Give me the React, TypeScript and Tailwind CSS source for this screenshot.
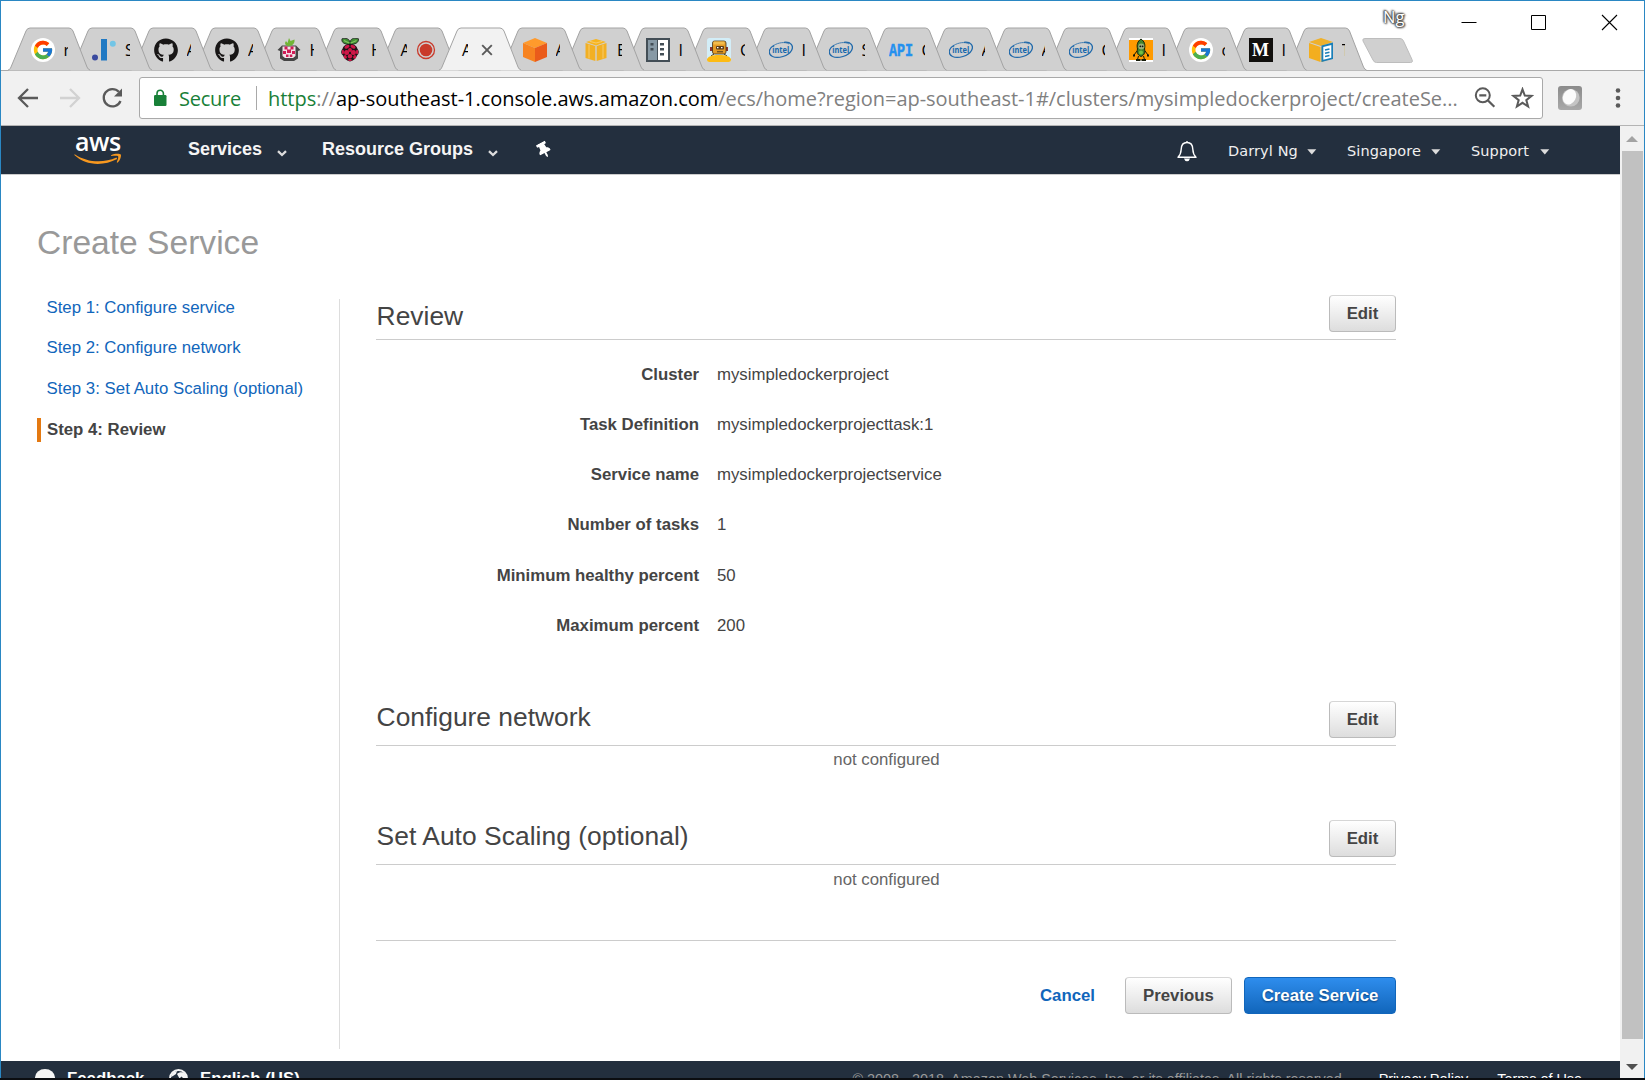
import type { ReactNode } from "react";
import { FcGoogle } from "react-icons/fc";
import { FaGithub, FaThumbtack } from "react-icons/fa";

function GoogleIcon() {
  return (
    <span className="flex size-6 items-center justify-center rounded-full bg-white">
      <FcGoogle size={22} />
    </span>
  );
}

function BarsIcon() {
  return (
    <svg width="24" height="24" viewBox="0 0 24 24">
      <circle cx="3" cy="19.5" r="3" fill="#3a4a9f" />
      <rect x="9" y="1" width="6" height="21.5" fill="#2079c3" />
      <circle cx="20.8" cy="5.8" r="3" fill="#72c5e6" />
    </svg>
  );
}

function GithubIcon() {
  return <FaGithub size={24.5} color="#181616" />;
}

function PiHomeIcon() {
  return (
    <svg width="24" height="24" viewBox="0 0 24 24">
      <path d="M.5 12 5 7.500h14l4.500 4.500-2.500 1v7.500L17 23H7l-4-2.500V13z" fill="#454545" />
      <path d="M5.500 8.500h13V18L16 20H8l-2.500-2z" fill="#f3e3e8" />
      <path d="M7.500 8.500h3v3h-3zM13.500 8.500h3v3h-3zM10 11.500h4v3.500h-4zM6 13h3v3H6zM15 13h3v3h-3zM9 16.500h2.500v2.500H9zM12.800 16.500h2.500v2.500h-2.500z" fill="#d01c56" />
      <path d="M12 8C8.500 8 7 5.500 9 3l1.500 2L12 0l1.500 3 4-1.500C18 5 16 8 12 8z" fill="#71b536" />
    </svg>
  );
}

function RaspberryIcon() {
  return (
    <svg width="24" height="24" viewBox="0 0 24 24">
      <path d="M12 6C7 7 3 4.500 4 .8 8-.2 11 .5 12 4 13-.2 17-.2 20.500.8 21 4.500 17 7 12 6z" fill="#3f8f33" stroke="#1d1d1d" strokeWidth=".8" />
      <path d="M6 2.500 11 5M18.500 2.500 13 5" stroke="#84c660" strokeWidth="1.200" />
      <path d="M12 6c4 0 7 2 7.500 5 2 2 1.500 5-.5 6.500-1 3-4 5.500-7 6-3-.5-6-3-7-6C3 16 2.500 13 4.500 11 5 8 8 6 12 6z" fill="#1d1418" />
      <g fill="#cf1647">
        <ellipse cx="9" cy="8.800" rx="2.700" ry="1.600" transform="rotate(-25 9 8.800)" />
        <ellipse cx="15" cy="8.800" rx="2.700" ry="1.600" transform="rotate(25 15 8.800)" />
        <circle cx="12" cy="12" r="2" />
        <circle cx="8.600" cy="14.500" r="2.500" />
        <circle cx="15.400" cy="14.500" r="2.500" />
        <ellipse cx="4.900" cy="14" rx="1.100" ry="2.300" />
        <ellipse cx="19.100" cy="14" rx="1.100" ry="2.300" />
        <circle cx="12" cy="18.200" r="2.200" />
        <ellipse cx="7.300" cy="18.900" rx="1.500" ry="1.900" transform="rotate(-30 7.300 18.900)" />
        <ellipse cx="16.700" cy="18.900" rx="1.500" ry="1.900" transform="rotate(30 16.700 18.900)" />
        <ellipse cx="12" cy="21.900" rx="2" ry="1" />
      </g>
    </svg>
  );
}

function OrangeCubeIcon() {
  return (
    <svg width="24" height="24" viewBox="0 0 24 24">
      <path d="M12 0 24 5 12 10 0 5z" fill="#ff9a2c" />
      <path d="M0 5 12 10v14L0 19z" fill="#f78320" />
      <path d="M24 5 12 10v14l12-5z" fill="#ea5b1b" />
    </svg>
  );
}

function YellowCubeIcon() {
  return (
    <svg width="24" height="24" viewBox="0 0 24 24">
      <path d="M12 1 22 4 12 7.500 2 4z" fill="#f7b51e" />
      <path d="M1.500 5 11.300 8v15L1.500 20z" fill="#f2b024" />
      <path d="M22.500 5 12.700 8v15l9.800-3z" fill="#f2b024" />
      <path d="M5.500 3.300 12 5l6.500-1.700M5 6.500V20.500M19 6.500V20.500" stroke="#f8cb6c" strokeWidth="1" fill="none" />
    </svg>
  );
}

function RackIcon() {
  return (
    <svg width="24" height="24" viewBox="0 0 24 24">
      <rect width="24" height="24" fill="#434e56" />
      <rect x="2" y="2" width="9" height="20" fill="#8799a5" />
      <rect x="12" y="2" width="10" height="20" fill="#fff" />
      <path d="M4.500 5h3v2.500h-3zM4.500 10h3v2.500h-3zM14 5h4v2.500h-4zM14 10h4v2.500h-4zM14 15h4v2.500h-4z" fill="#434e56" />
    </svg>
  );
}

function RobotIcon() {
  return (
    <svg width="24" height="24" viewBox="0 0 24 24">
      <rect width="24" height="24" rx="2.500" fill="#d3eef8" />
      <path d="M3 9h3v4H3zM18 9h3v4h-3z" fill="#8d3430" />
      <rect x="5.500" y="3" width="13.500" height="13" rx="2" fill="#e59b25" stroke="#45351b" strokeWidth=".8" />
      <path d="M6.500 3.500h11v3h-11z" fill="#f3bd4d" />
      <rect x="9" y="8" width="8" height="3.500" rx="1" fill="#593d1c" />
      <path d="M10 9.700h1.500M14 9.700h1.500" stroke="#fff" strokeWidth="1.300" />
      <path d="M10 13.800h6M7 16l-3 2M17 16l3 2" stroke="#45351b" />
      <path d="M0 21c2-3 5-4 12-4s10 1 12 4v.5a2.500 2.500 0 0 1-2.500 2.500h-19A2.500 2.500 0 0 1 0 21.500z" fill="#fdbb14" />
    </svg>
  );
}

function IntelIcon() {
  return (
    <svg width="24" height="24" viewBox="0 0 24 24">
      <path d="M15 4.300C22 3.500 25 8 22.500 12.500 19.500 18 9 21 3.500 18.500-1.500 16-.5 10.500 5 7.300" fill="none" stroke="#2069aa" strokeWidth="1.300" />
      <path d="M5 7.300C9 4.800 16 3.300 20 6" fill="none" stroke="#2069aa" strokeWidth=".8" />
      <text x="3.200" y="15.200" fontFamily="Open Sans" fontWeight="700" fontSize="8.800" textLength="17" lengthAdjust="spacingAndGlyphs" fill="#1668ad">
        intel
      </text>
    </svg>
  );
}

function ApiIcon() {
  return (
    <svg width="24" height="24" viewBox="0 0 24 24">
      <text x="0" y="18" fontFamily="Liberation Mono" fontWeight="700" fontSize="17.500" textLength="24" lengthAdjust="spacingAndGlyphs" fill="#2490ef" stroke="#2490ef" strokeWidth=".5">
        API
      </text>
    </svg>
  );
}

function PeaIcon() {
  return (
    <svg width="24" height="24" viewBox="0 0 24 24">
      <rect width="24" height="24" fill="#fff" />
      <rect y="2" width="24" height="20" fill="#ff9a00" />
      <path d="M12 1C15.500 3.500 16.500 6.500 15.500 11c1 3 0 6-3.500 7.500-3.500-1.500-4.500-4.500-3.500-7.500C7.500 6.500 8.500 3.500 12 1z" fill="#41802a" stroke="#14220c" />
      <circle cx="12.300" cy="8.500" r="3" fill="#9aae7b" />
      <circle cx="11.300" cy="8.300" r=".9" fill="#111" />
      <circle cx="13.600" cy="8.300" r=".9" fill="#111" />
      <circle cx="12" cy="14.500" r="2" fill="#74c043" />
      <path d="M8 13 5 17M16 13l3 4M9.500 18l-1 3.500M14.500 18l1 3.500" stroke="#161a08" />
      <path d="M4 16.500h2v2H4zM18 16.500h2v2h-2zM7 21h4.500v2H7zM12.500 21H17v2h-4.500z" fill="#161a08" />
    </svg>
  );
}

function MediumIcon() {
  return (
    <span className="flex size-6 items-center justify-center bg-[#12100e] font-['Liberation_Serif'] text-[18px] leading-none font-bold text-white">
      M
    </span>
  );
}

function ConsoleBoxIcon() {
  return (
    <svg width="24" height="24" viewBox="0 0 24 24">
      <path d="M12 0 24 4 12 8 0 4z" fill="#efb12b" />
      <path d="M0 5 11.500 9v15L0 20z" fill="#f3ae1f" />
      <path d="M24 5 12.500 9v15L24 20z" fill="#eaa91e" />
      <path d="M12.500 7.500 24 4.500V21l-11.500 3z" fill="#1a7fb8" />
      <path d="M14.300 9 22.300 7v12.800l-8 2z" fill="#fff" />
      <path d="M16 12l4.500-1M16 15.300l4.500-1M16 18.600l4.500-1" stroke="#1a7fb8" strokeWidth="1.500" />
    </svg>
  );
}

type Tab = { icon?: ReactNode; title: string; kind?: "record" | "active"; narrow?: boolean };

const TABS: Tab[] = [
  { icon: <GoogleIcon />, title: "r" },
  { icon: <BarsIcon />, title: "S" },
  { icon: <GithubIcon />, title: "A" },
  { icon: <GithubIcon />, title: "A" },
  { icon: <PiHomeIcon />, title: "H" },
  { icon: <RaspberryIcon />, title: "H" },
  { title: "A", kind: "record" },
  { title: "A", kind: "active" },
  { icon: <OrangeCubeIcon />, title: "A" },
  { icon: <YellowCubeIcon />, title: "E" },
  { icon: <RackIcon />, title: "I" },
  { icon: <RobotIcon />, title: "C" },
  { icon: <IntelIcon />, title: "I", narrow: true },
  { icon: <IntelIcon />, title: "S", narrow: true },
  { icon: <ApiIcon />, title: "C", narrow: true },
  { icon: <IntelIcon />, title: "A", narrow: true },
  { icon: <IntelIcon />, title: "A", narrow: true },
  { icon: <IntelIcon />, title: "C", narrow: true },
  { icon: <PeaIcon />, title: "I", narrow: true },
  { icon: <GoogleIcon />, title: "c", narrow: true },
  { icon: <MediumIcon />, title: "I", narrow: true },
  { icon: <ConsoleBoxIcon />, title: "T", narrow: true },
];

function TabItem({ tab, index }: { tab: Tab; index: number }) {
  const active = tab.kind === "active";
  const w = tab.narrow ? 80.5 : 82;
  return (
    <div
      className={`relative -mr-[20.5px] h-[44px] shrink-0 ${tab.narrow ? "w-[80.5px]" : "w-[82px]"}`}
      style={{ zIndex: active ? 50 : 30 - index }}
    >
      <svg className="absolute inset-0" width={w} height="44" viewBox={`0 0 ${w} 44`}>
        <path
          d={`M0 43.500 C2 42.500 2 42 3 40 L18 4 Q19.200 1 22 1 H${w - 21} Q${w - 18.500} 1 ${w - 17} 4 L${w - 3} 40 Q${w - 2} 42.500 ${w} 43.500z`}
          fill={active ? "#f2f2f2" : "#d0d0d0"}
        />
        <path
          d={`M0 43 C2 42.500 2 42 3 40 L18 4 Q19.200 1 22 1 H${w - 21} Q${w - 18.500} 1 ${w - 17} 4 L${w - 3} 40 Q${w - 2} 42.500 ${w} 43`}
          fill="none"
          stroke="#a3a3a3"
        />
      </svg>
      <div className="relative flex h-full items-center pt-0.5 pl-[22.5px]">
        {tab.kind ? (
          <>
            <span className="w-[7px] overflow-hidden pl-px font-['Open_Sans'] text-[16px] leading-6 text-black">{tab.title}</span>
            {active ? (
              <svg className="ml-[13px]" width="12" height="12" viewBox="0 0 12 12">
                <path d="M1.200 1.200 10.800 10.800M10.800 1.200 1.200 10.800" stroke="#5a5a5a" strokeWidth="1.900" />
              </svg>
            ) : (
              <svg className="ml-[9px]" width="20" height="20" viewBox="0 0 20 20">
                <circle cx="10" cy="10" r="8.500" fill="#d0d0d0" stroke="#c93a2b" strokeWidth="1.300" />
                <circle cx="10" cy="10" r="6.300" fill="#c93a2b" />
              </svg>
            )}
          </>
        ) : (
          <>
            <span className="flex size-6 shrink-0 items-center justify-center">{tab.icon}</span>
            <span
              className={`ml-[9px] overflow-hidden font-['Open_Sans'] text-[16px] leading-6 text-black ${tab.narrow ? "w-[3px]" : "w-[4.500px]"}`}
            >
              {tab.title}
            </span>
          </>
        )}
      </div>
    </div>
  );
}

function TitleBar() {
  return (
    <div className="flex h-[70px] shrink-0 border-t border-[#2a87c3] bg-white">
      <div className="flex shrink-0 pt-[26px] pl-[7px]">
        {TABS.map((t, i) => (
          <TabItem key={i} tab={t} index={i} />
        ))}
      </div>
      <svg className="mt-[37px] ml-[16px] shrink-0" width="52" height="26" viewBox="0 0 52 26">
        <path d="M3 .5H38q2.500 0 3.500 2.500L50 21.500q1.300 3-1.500 3H14.500q-2.500 0-3.500-2.500L1 3Q0 .5 3 .5z" fill="#d0d0d0" stroke="#bdbdbd" />
      </svg>
      <div className="-ml-[31px] flex shrink-0">
        <span className="mt-[5px] w-[78px] font-['Open_Sans'] text-[16.500px] leading-[22px] text-white [text-shadow:0_0_2px_#333,0_0_2px_#333,1px_1px_2px_#444,-1px_-1px_2px_#555]">
          Ng
        </span>
        <svg className="mt-3 mr-[53px]" width="16" height="18" viewBox="0 0 16 18">
          <path d="M.5 9.500h15" stroke="#000" />
        </svg>
        <svg className="mt-[13px] mr-[54px]" width="17" height="17" viewBox="0 0 17 17">
          <path d="M1.500 1.500h14v14h-14z" fill="none" stroke="#000" />
        </svg>
        <svg className="mt-[13px]" width="17" height="17" viewBox="0 0 17 17">
          <path d="M1 1l15 15M16 1 1 16" stroke="#000" strokeWidth="1.100" />
        </svg>
      </div>
    </div>
  );
}

function Toolbar() {
  return (
    <div className="flex h-[56px] shrink-0 items-center border-y border-t-[#a9a9a9] border-b-[#b4b4b4] bg-[#f1f1f1]">
      <svg className="ml-[16px]" width="22" height="22" viewBox="0 0 22 22">
        <path d="M21 11H2M11 2 2 11l9 9" fill="none" stroke="#5a5a5a" strokeWidth="2.300" />
      </svg>
      <svg className="ml-5" width="22" height="22" viewBox="0 0 22 22">
        <path d="M1 11h19M11 2l9 9-9 9" fill="none" stroke="#d2d2d2" strokeWidth="2.300" />
      </svg>
      <svg className="ml-[19px]" width="24" height="24" viewBox="0 0 24 24">
        <path d="M18.800 5.800A8.700 8.700 0 1 0 20.500 15" fill="none" stroke="#5a5a5a" strokeWidth="2.300" />
        <path d="M22 2.500v8h-8z" fill="#5a5a5a" />
      </svg>
      <div className="ml-[15px] flex h-[42px] w-[1404px] items-center rounded-[3px] border border-[#a9a9a9] bg-white">
        <svg className="ml-[14px]" width="13" height="18" viewBox="0 0 13 18">
          <rect x="0" y="6" width="12.500" height="11" rx="1.200" fill="#188038" />
          <path d="M3 7V4.500a3.200 3.200 0 0 1 6.400 0V7" fill="none" stroke="#188038" strokeWidth="1.600" />
        </svg>
        <span className="ml-[12px] w-[77px] pt-0.5 font-['Open_Sans'] text-[20px] tracking-[-0.25px] text-[#188038]">Secure</span>
        <span className="h-6 w-px bg-[#a9a9a9]" />
        <span className="ml-[11px] w-[1210px] pt-0.5 font-['Open_Sans'] text-[20px] tracking-[-0.03px] whitespace-nowrap text-[#808080]">
          <span className="text-[#188038]">https</span>://<span className="text-black">ap-southeast-1.console.aws.amazon.com</span>
          /ecs/home?region=ap-southeast-1#/clusters/mysimpledockerproject/createSe...
        </span>
        <svg className="-ml-1" width="22" height="22" viewBox="0 0 22 22">
          <circle cx="8.800" cy="8.300" r="7" fill="none" stroke="#5a5a5a" strokeWidth="2" />
          <path d="M5.300 8.300h7M13.500 13l6.800 6.800" stroke="#5a5a5a" strokeWidth="2.200" />
        </svg>
        <svg className="ml-[15px]" width="23" height="22" viewBox="0 0 23 22">
          <path d="M11.500 2.300l2.300 6.300 6.700.3-5.200 4.200 1.800 6.400-5.600-3.700-5.600 3.700 1.800-6.400L2.500 8.900l6.700-.3z" fill="none" stroke="#5a5a5a" strokeWidth="2" />
        </svg>
      </div>
      <svg className="ml-[15px]" width="24" height="24" viewBox="0 0 24 24">
        <defs>
          <linearGradient id="ext" x2="0" y2="1">
            <stop stopColor="#8b8b8b" />
            <stop offset="1" stopColor="#a9a9a9" />
          </linearGradient>
        </defs>
        <rect width="24" height="24" rx="3" fill="url(#ext)" />
        <circle cx="12.800" cy="11.800" r="8.800" fill="#c4c4c4" />
        <ellipse cx="11.500" cy="10.800" rx="6.300" ry="8" transform="rotate(28 11.500 10.800)" fill="#fbfbfb" />
      </svg>
      <svg className="ml-[33px]" width="6" height="22" viewBox="0 0 6 22">
        <g fill="#5a5a5a">
          <circle cx="3" cy="3.500" r="2.300" />
          <circle cx="3" cy="11" r="2.300" />
          <circle cx="3" cy="18.500" r="2.300" />
        </g>
      </svg>
    </div>
  );
}

function Chevron() {
  return (
    <svg className="mt-[13px]" width="10" height="7" viewBox="0 0 10 7">
      <path d="M1 1.200 5 5l4-3.800" fill="none" stroke="#ddd" strokeWidth="2.300" />
    </svg>
  );
}

function Caret() {
  return (
    <svg width="10" height="6" viewBox="0 0 10 6">
      <path d="M.3.300h9L4.800 5.500z" fill="#ddd" />
    </svg>
  );
}

function NavBar() {
  return (
    <nav className="flex h-[48px] shrink-0 bg-[#232f3e] text-white">
      <div className="mt-[8px] ml-[73px] flex w-[50px] flex-col">
        <span className="pl-px font-['Open_Sans'] text-[25px] leading-[15px] font-semibold tracking-[-0.5px]">aws</span>
        <svg className="mt-[4px]" width="48" height="13" viewBox="0 0 48 13">
          <path d="M.7 1.200C13 9.500 29 10.500 42.500 4.500l.7 1.500C29 13.500 11.500 12.500.3 2z" fill="#f7981f" />
          <path d="M37 2.200c3.500-2 9-1.800 9.800-.8.7 1.300-.5 5.800-3.300 8.300l-.8-.5c1.200-2.500 2-5.200 1.400-5.900-.7-.7-4-.6-6.900-.2z" fill="#f7981f" />
        </svg>
      </div>
      <div className="flex pt-[11px] text-[18px] leading-6 font-bold text-[#f5f5f5]">
        <span className="ml-[64px] w-[89px]">Services</span>
        <Chevron />
        <span className="ml-[35px] w-[166px]">Resource Groups</span>
        <Chevron />
      </div>
      <FaThumbtack className="mt-4 ml-[38px] -rotate-[28deg]" size={16} color="#fff" />
      <svg className="mt-[14px] ml-auto" width="20" height="22" viewBox="0 0 20 22">
        <path d="M10 1v1.500M1 17.300c2.500-2.300 3-4 3.200-8C4.300 5 6.500 2.500 10 2.500S15.700 5 15.800 9.300c.2 4 .7 5.700 3.200 8z" fill="none" stroke="#fff" strokeWidth="1.400" strokeLinejoin="round" />
        <path d="M7 18.500h6q-.8 2.800-3 2.800T7 18.500z" fill="#fff" />
      </svg>
      <div className="mr-[70px] ml-[31px] flex items-center pt-[4px] font-['DejaVu_Sans'] text-[14.500px] text-[#f0f0f0]">
        <span className="w-[79px] tracking-[0.1px]">Darryl Ng</span>
        <Caret />
        <span className="ml-[30px] w-[84px] tracking-[0.1px]">Singapore</span>
        <Caret />
        <span className="ml-[30px] w-[69px] tracking-[0.1px]">Support</span>
        <Caret />
      </div>
    </nav>
  );
}

function Button({ children, primary, className = "" }: { children: ReactNode; primary?: boolean; className?: string }) {
  return (
    <button
      className={`flex h-[37px] items-center justify-center rounded-[4px] border font-bold ${
        primary
          ? "border-[#1166bb] bg-gradient-to-b from-[#2e8ded] to-[#1166bb] text-white [text-shadow:0_1px_2px_#0a3d75]"
          : "border-[#bbb] border-t-[#d6d6d6] bg-gradient-to-b from-white to-[#dddddd] text-[#444]"
      } ${className}`}
    >
      {children}
    </button>
  );
}

function SectionHeader({ title, className }: { title: string; className: string }) {
  return (
    <div className="flex h-[45px] justify-between border-b border-[#ccc]">
      <h2 className={`pl-[0.6px] text-[26.400px] leading-[30px] ${className}`}>{title}</h2>
      <Button className="w-[67px]">Edit</Button>
    </div>
  );
}

const DETAILS = [
  ["Cluster", "mysimpledockerproject", "h-[50px]"],
  ["Task Definition", "mysimpledockerprojecttask:1", "h-[50px]"],
  ["Service name", "mysimpledockerprojectservice", "h-[50px]"],
  ["Number of tasks", "1", "h-[51px]"],
  ["Minimum healthy percent", "50", "h-[50px]"],
  ["Maximum percent", "200", "h-[50px]"],
];

function Wizard() {
  return (
    <main className="flex grow flex-col border-t border-[#ccc] bg-white pl-[36px] text-[16.800px] leading-6 text-[#444]">
      <h1 className="mt-[48px] h-10 text-[33.600px] leading-10 text-[#999]">Create Service</h1>
      <div className="mt-[32px] flex">
        <div className="flex w-[302px] flex-col pt-px">
          <a className="h-10 pl-[9.500px] text-[#1166bb]">Step 1: Configure service</a>
          <a className="h-[41px] pl-[9.500px] text-[#1166bb]">Step 2: Configure network</a>
          <a className="h-[41px] pl-[9.500px] tracking-[0.03px] text-[#1166bb]">Step 3: Set Auto Scaling (optional)</a>
          <span className="h-6 border-l-4 border-[#e47911] pl-[6px] font-bold">Step 4: Review</span>
        </div>
        <div className="mt-1 h-[750px] w-px bg-[#ddd]" />
        <div className="ml-[36px] flex w-[1020px] flex-col">
          <SectionHeader title="Review" className="pt-[6px]" />
          <dl className="pt-[23px]">
            {DETAILS.map(([k, v, h]) => (
              <div key={k} className={`flex ${h}`}>
                <dt className="w-[323px] text-right font-bold">{k}</dt>
                <dd className="ml-[18px]">{v}</dd>
              </div>
            ))}
          </dl>
          <div className="mt-[37px]">
            <SectionHeader title="Configure network" className="pt-px" />
          </div>
          <p className="mt-[2px] h-6 pl-px text-center text-[#666]">not configured</p>
          <div className="mt-[48px]">
            <SectionHeader title="Set Auto Scaling (optional)" className="pt-px tracking-[0.04px]" />
          </div>
          <p className="mt-[3px] h-6 pl-px text-center text-[#666]">not configured</p>
          <div className="mt-[48px] border-t border-[#ccc]" />
          <div className="mt-9 flex items-center justify-end">
            <a className="mr-[30px] font-bold text-[#1166bb]">Cancel</a>
            <Button className="mr-3 w-[107px]">Previous</Button>
            <Button primary className="w-[152px]">Create Service</Button>
          </div>
        </div>
      </div>
    </main>
  );
}

function Footer() {
  return (
    <footer className="flex h-[17px] shrink-0 overflow-hidden bg-[#232f3e] text-white">
      <svg className="mt-2 ml-[34px] shrink-0" width="20" height="18" viewBox="0 0 20 18">
        <ellipse cx="10" cy="8.500" rx="10" ry="8.500" fill="#f5f5f5" />
      </svg>
      <span className="mt-[6px] ml-3 w-[102px] text-[16.800px] leading-6 font-bold">Feedback</span>
      <svg className="mt-2 shrink-0" width="19" height="19" viewBox="0 0 19 19">
        <circle cx="9.500" cy="9.500" r="8.500" fill="#232f3e" stroke="#f5f5f5" strokeWidth="1.800" />
        <path d="M2 8C3 4 5 2 8 2L7 5 4 7zM8 5c2-2 6-2.500 8.500 0l1 4-3 .5-2-2-2 2z" fill="#f5f5f5" />
      </svg>
      <span className="mt-[6px] ml-3 text-[16.800px] leading-6 font-bold">English (US)</span>
      <div className="mr-[38px] ml-auto flex pt-[6px] text-[14.400px] leading-6">
        <span className="text-[#999]">© 2008 - 2018, Amazon Web Services, Inc. or its affiliates. All rights reserved.</span>
        <span className="ml-[33px]">Privacy Policy</span>
        <span className="ml-[29px]">Terms of Use</span>
      </div>
    </footer>
  );
}

function Scrollbar() {
  return (
    <div className="flex w-[24px] shrink-0 flex-col items-center bg-[#f1f1f1]">
      <svg className="mt-[10px] mb-[9px]" width="12" height="6" viewBox="0 0 12 6">
        <path d="M6 0l6 6H0z" fill="#a3a3a3" />
      </svg>
      <div className="h-[888px] w-[21px] bg-[#c1c1c1]" />
      <svg className="mt-[25px]" width="12" height="6" viewBox="0 0 12 6">
        <path d="M0 0h12L6 6z" fill="#505050" />
      </svg>
    </div>
  );
}

export default function App() {
  return (
    <div className="flex h-[1080px] w-[1645px] flex-col overflow-hidden border-b-2 border-[#0b0d11] bg-white font-['Liberation_Sans',sans-serif]">
      <div className="flex min-h-0 grow flex-col border-x border-[#2a87c3]">
        <TitleBar />
        <Toolbar />
        <div className="flex min-h-0 grow">
          <div className="flex min-w-0 grow flex-col">
            <NavBar />
            <Wizard />
            <Footer />
          </div>
          <Scrollbar />
        </div>
      </div>
    </div>
  );
}
